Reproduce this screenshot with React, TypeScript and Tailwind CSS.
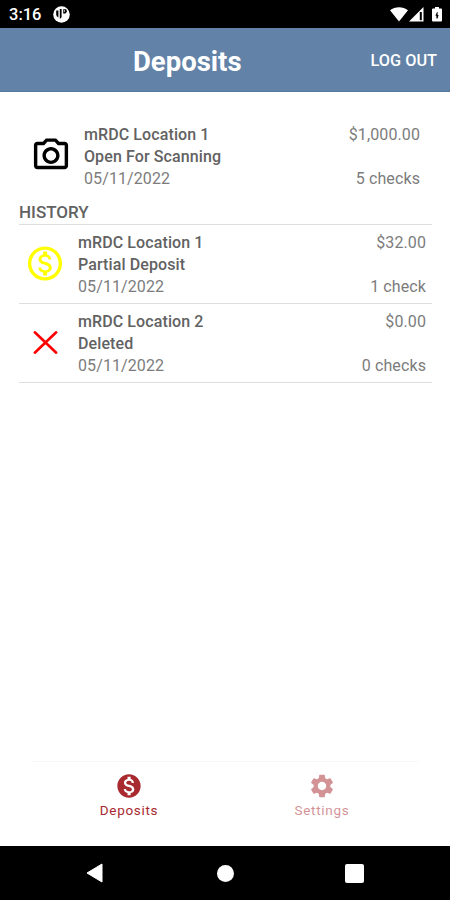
import {
  MdMonetizationOn,
  MdOutlineMonetizationOn,
  MdOutlinePhotoCamera,
  MdSettings,
} from "react-icons/md";
import type { ComponentType } from "react";

type Deposit = {
  location: string;
  status: string;
  date: string;
  amount: string;
  checks: string;
  icon: ComponentType<{ className?: string }>;
  iconColor: string;
};

function CrossIcon({ className }: { className?: string }) {
  return (
    <svg className={className} viewBox="0 0 42 41">
      <path
        d="M10.8 10.3L32.2 30.7M32.2 10.3L10.8 30.7"
        stroke="currentColor"
        strokeWidth="2.6"
        strokeLinecap="round"
      />
    </svg>
  );
}

const current: Deposit = {
  location: "mRDC Location 1",
  status: "Open For Scanning",
  date: "05/11/2022",
  amount: "$1,000.00",
  checks: "5 checks",
  icon: MdOutlinePhotoCamera,
  iconColor: "text-black",
};

const deposits: Deposit[] = [
  {
    location: "mRDC Location 1",
    status: "Partial Deposit",
    date: "05/11/2022",
    amount: "$32.00",
    checks: "1 check",
    icon: MdOutlineMonetizationOn,
    iconColor: "text-[#ffff00]",
  },
  {
    location: "mRDC Location 2",
    status: "Deleted",
    date: "05/11/2022",
    amount: "$0.00",
    checks: "0 checks",
    icon: CrossIcon,
    iconColor: "text-[#ff0000]",
  },
];

function StatusBar() {
  return (
    <div className="flex h-7 items-center bg-black pl-[9px] pr-2 pt-0.5 text-white">
      <span className="w-11 text-[16.5px] font-medium leading-none">3:16</span>
      <svg className="mb-0.5 h-[17px] w-[17px]" viewBox="0 0 17 17">
        <circle cx="8.5" cy="8.5" r="8.3" fill="#fff" />
        <path d="M3.2 4.4h2.2v7.2q-2.2-1-2.2-3z" fill="#000" />
        <path d="M6.8 3h1.8v7.4q0 2-1.8 2.4z" fill="#000" />
        <path d="M10.2 3.2h3l.8 2.4-1.6 1.8h-2.2z" fill="#000" />
        <circle cx="11.4" cy="5" r="0.7" fill="#fff" />
      </svg>
      <div className="mb-0.5 ml-auto flex items-center">
        <svg className="h-[15px] w-[18px]" viewBox="0 0 18 15">
          <path d="M0 3.2C5-.8 13-.8 18 3.2L9 14.5z" fill="#fff" />
        </svg>
        <svg className="ml-px h-[15px] w-[15px]" viewBox="0 0 15 15">
          <path d="M0 14.5L14.5 0v14.5z" fill="#fff" />
          <path d="M11.8 5v8.2" stroke="#000" strokeWidth="2" />
        </svg>
        <svg className="ml-2 h-[15px] w-[10px]" viewBox="0 0 10 15">
          <path d="M3 0h4v1.6h2q1 0 1 1v11q0 1-1 1H1q-1 0-1-1v-11q0-1 1-1h2z" fill="#fff" />
          <path d="M5 5L3.4 8.7h1v2.8h1.2L6.6 8H5.6V5z" fill="#000" />
        </svg>
      </div>
    </div>
  );
}

function DepositRow({ deposit }: { deposit: Deposit }) {
  const Icon = deposit.icon;

  return (
    <div className="flex items-start text-base leading-[22px] tracking-[0.1px] text-[#7c7c7c]">
      <Icon className={`mt-[11px] h-[41px] w-[42px] shrink-0 ${deposit.iconColor}`} />
      <div className="ml-3 flex-1">
        <p className="font-medium text-[#626262]">{deposit.location}</p>
        <p className="font-medium text-[#626262]">{deposit.status}</p>
        <p>{deposit.date}</p>
      </div>
      <div className="flex h-[66px] flex-col justify-between text-right">
        <p>{deposit.amount}</p>
        <p>{deposit.checks}</p>
      </div>
    </div>
  );
}

export default function App() {
  return (
    <div className="flex h-[900px] w-[450px] flex-col bg-white font-['Roboto',sans-serif]">
      <StatusBar />
      <header className="flex h-16 items-center border-b border-[#55789d] bg-[#6282a7] pl-[133px] pr-[13px] text-white">
        <h1 className="pt-1 text-[27.5px] font-bold leading-none">Deposits</h1>
        <button className="ml-auto pt-1 text-[16.3px] font-medium">LOG OUT</button>
      </header>

      <main className="flex-1 pl-[19px] pr-[18px] pt-8">
        <div className="pl-[11px] pr-3">
          <DepositRow deposit={current} />
        </div>
        <h2 className="mt-[11px] h-[23px] text-[17px] font-medium leading-[23px] text-[#626262]">
          HISTORY
        </h2>
        <ul className="border-t border-[#dedede]">
          {deposits.map((deposit) => (
            <li
              key={deposit.location}
              className="h-[79px] border-b border-[#dedede] pl-[5px] pr-1.5 pt-[7px]"
            >
              <DepositRow deposit={deposit} />
            </li>
          ))}
        </ul>
      </main>

      <nav className="mx-8 flex h-[85px] border-t border-[#f8f8f8] pt-[10px] text-[13.5px] leading-5 tracking-[0.7px] text-[#a82a2f]">
        <a className="flex flex-1 flex-col items-center">
          <MdMonetizationOn className="h-7 w-7" />
          <span className="pl-px">Deposits</span>
        </a>
        <a className="flex flex-1 flex-col items-center opacity-50">
          <MdSettings className="h-7 w-7" />
          <span className="pl-px">Settings</span>
        </a>
      </nav>

      <div className="flex h-[54px] items-center bg-black pl-[86px] pr-[86px]">
        <svg className="h-5 w-[17px]" viewBox="0 0 17 20">
          <path d="M1 10L16 1v18z" fill="#fff" stroke="#fff" strokeLinejoin="round" />
        </svg>
        <div className="ml-[114px] h-[17px] w-[17px] rounded-full bg-white" />
        <div className="ml-auto h-[19px] w-[19px] rounded-xs bg-white" />
      </div>
    </div>
  );
}
